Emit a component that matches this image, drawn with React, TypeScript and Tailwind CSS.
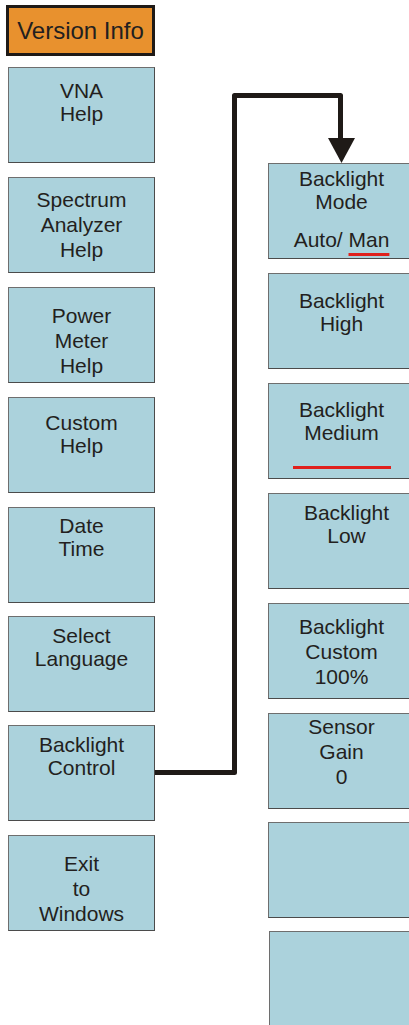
import type { ReactNode } from "react"

type Key = {
  lines: string[]
  pt: string
  mt: string
  lh: string
  extra?: string
}

const leftKeys: Key[] = [
  { lines: ["VNA", "Help"], pt: "pt-[11px]", mt: "mt-[11px]", lh: "leading-[23px]" },
  { lines: ["Spectrum", "Analyzer", "Help"], pt: "pt-[9px]", mt: "mt-[14px]", lh: "leading-[25px]" },
  { lines: ["Power", "Meter", "Help"], pt: "pt-[15px]", mt: "mt-[14px]", lh: "leading-[25px]" },
  { lines: ["Custom", "Help"], pt: "pt-[13px]", mt: "mt-[14px]", lh: "leading-[23px]" },
  { lines: ["Date", "Time"], pt: "pt-[6px]", mt: "mt-[14px]", lh: "leading-[23px]" },
  { lines: ["Select", "Language"], pt: "pt-[7px]", mt: "mt-[13px]", lh: "leading-[23px]" },
  { lines: ["Backlight", "Control"], pt: "pt-[7px]", mt: "mt-[13px]", lh: "leading-[23px]" },
  { lines: ["Exit", "to", "Windows"], pt: "pt-[15px]", mt: "mt-[14px]", lh: "leading-[25px]" },
]

function SoftKey({ k, children, className = "" }: { k?: Key; children?: ReactNode; className?: string }) {
  return (
    <div
      className={`flex h-[96px] w-[147px] shrink-0 flex-col items-center border border-[#4b4b4b] border-t-[#6e6e6e] border-l-[#6e6e6e] bg-[#abd2dc] text-center text-[21px] text-[#231f20] ${
        k ? `${k.pt} ${k.mt} ${k.lh}` : ""
      } ${className}`}
    >
      {k?.lines.map((l) => (
        <span key={l} className="block">
          {l}
        </span>
      ))}
      {children}
    </div>
  )
}

export default function App() {
  return (
    <div className="relative h-[1025px] w-full overflow-hidden bg-white font-['Liberation_Sans',Arial,sans-serif]">
      <div className="flex">
        {/* Main menu */}
        <div className="flex w-[155px] shrink-0 flex-col pl-[8px] pt-[5px]">
          <div className="-ml-[2px] flex h-[51px] w-[149px] items-center justify-center border-[3px] border-[#1f1a17] bg-[#e8912e] text-[24px] text-[#231f20]">
            Version Info
          </div>
          {leftKeys.map((k) => (
            <SoftKey key={k.lines.join("-")} k={k} />
          ))}
        </div>

        {/* Backlight submenu */}
        <div className="ml-[113px] flex flex-col pt-[163px]">
          <SoftKey className="pt-[3px] leading-[23px]">
            <span className="block">Backlight</span>
            <span className="block">Mode</span>
            <span className="mt-[15px] block">
              Auto/{" "}
              <span className="underline decoration-[#e0201c] decoration-[3px] underline-offset-[6px]">Man</span>
            </span>
          </SoftKey>
          <SoftKey k={{ lines: ["Backlight", "High"], pt: "pt-[15px]", mt: "mt-[14px]", lh: "leading-[23px]" }} />
          <SoftKey k={{ lines: ["Backlight", "Medium"], pt: "pt-[14px]", mt: "mt-[14px]", lh: "leading-[23px]" }}>
            <div className="mt-[22px] h-[3px] w-[98px] bg-[#e0201c]" />
          </SoftKey>
          <SoftKey
            k={{ lines: ["Backlight", "Low"], pt: "pt-[7px]", mt: "mt-[14px]", lh: "leading-[23px]" }}
            className="pl-[10px]"
          />
          <SoftKey k={{ lines: ["Backlight", "Custom", "100%"], pt: "pt-[10px]", mt: "mt-[14px]", lh: "leading-[25px]" }} />
          <SoftKey k={{ lines: ["Sensor", "Gain", "0"], pt: "pt-0", mt: "mt-[14px]", lh: "leading-[25px]" }} />
          <SoftKey className="mt-[13px]" />
          <SoftKey className="mt-[13px] ml-[1px] h-[110px]" />
        </div>
      </div>

      {/* Connector from Backlight Control to the submenu */}
      <svg className="pointer-events-none absolute left-0 top-0" width="409" height="1025" viewBox="0 0 409 1025">
        <path
          d="M155 772.5 H234.5 V95.5 H340.5 V142"
          fill="none"
          stroke="#1f1a17"
          strokeWidth="5"
          strokeLinejoin="round"
        />
        <polygon points="328,138 355,138 341.5,163" fill="#1f1a17" />
      </svg>
    </div>
  )
}
